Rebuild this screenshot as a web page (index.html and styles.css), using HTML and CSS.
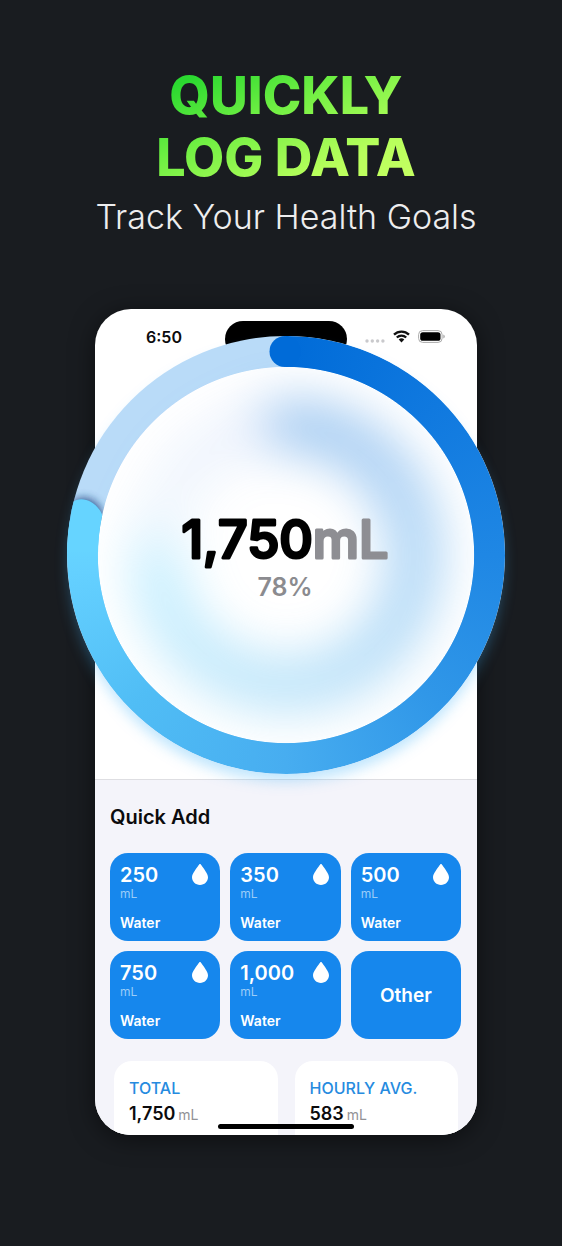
FILE: index.html
```
<!DOCTYPE html>
<html lang="en">
<head>
<meta charset="utf-8">
<meta name="viewport" content="width=device-width, initial-scale=1">
<title>Quickly Log Data</title>
<link rel="stylesheet" href="styles.css">
</head>
<body>
<svg class="defs" aria-hidden="true">
  <symbol id="drop" viewBox="0 0 16 21"><path d="M8 0C8.6 0 9.1.7 9.6 1.5C11.500 4.500 16 9.600 16 13.300C16 17.700 12.400 21 8 21S0 17.700 0 13.300C0 9.600 4.500 4.500 6.400 1.500C6.900.7 7.400 0 8 0Z" fill="#fff"/></symbol>
</svg>
<main class="page">
  <header class="hero">
    <h1 class="title">QUICKLY<br>LOG DATA</h1>
    <p class="subtitle">Track Your Health Goals</p>
  </header>
  <section class="phone">
    <div class="status">
      <span class="time">6:50</span>
      <span class="island"></span>
      <span class="indicators">
        <svg width="20" height="4" viewBox="0 0 20 4" class="cell"><g fill="#c9c9cc"><circle cx="2" cy="2" r="1.700"/><circle cx="7.300" cy="2" r="1.700"/><circle cx="12.600" cy="2" r="1.700"/><circle cx="17.900" cy="2" r="1.700"/></g></svg>
        <svg width="17" height="13" viewBox="0 0 17 13"><g fill="none" stroke="#111" stroke-width="2.300"><path d="M1 4.600A10.700 10.700 0 0 1 16 4.600"/><path d="M3.800 7.500A6.700 6.700 0 0 1 13.200 7.500"/></g><path d="M5.700 9.500A4 4 0 0 1 11.300 9.500L8.500 12.400Z" fill="#111"/></svg>
        <svg width="27" height="13" viewBox="0 0 27 13"><rect x=".6" y=".6" width="23.500" height="11.800" rx="4" fill="#fff" stroke="#aaa"/><rect x="2.200" y="2.200" width="20.300" height="8.600" rx="2.600" fill="#000"/><path d="M25.300 4.500Q26.800 5.200 26.800 6.500T25.300 8.500Z" fill="#aaa"/></svg>
      </span>
    </div>
    <div class="ring" role="meter" aria-label="Water intake" aria-valuemin="0" aria-valuemax="100" aria-valuenow="78">
      <div class="halo"><div class="halo-arc"></div></div>
      <div class="arc"></div>
      <svg class="ring-top" viewBox="0 0 438 438">
        <defs>
          <clipPath id="band"><path clip-rule="evenodd" d="M219 0a219 219 0 1 1 0 438a219 219 0 1 1 0-438ZM219 31a188 188 0 1 0 0 376a188 188 0 1 0 0-376Z"/></clipPath>
          <filter id="soft" x="-50%" y="-50%" width="200%" height="200%"><feGaussianBlur stdDeviation="4"/></filter>
        </defs>
        <circle cx="218" cy="15.500" r="15.500" fill="#006bd8"/>
        <g clip-path="url(#band)">
          <path d="M0 176C4 156 32 156 37 182L34 190L0 184Z" fill="#123e7c" opacity=".8" filter="url(#soft)"/>
          <path d="M-2 178C2 157 30 157 38 186V216H-2Z" fill="#66d4ff"/>
        </g>
        <text class="amount" x="218" y="222" text-anchor="middle">1,750<tspan class="amount-unit">mL</tspan></text>
        <text class="percent" x="218" y="260" text-anchor="middle">78%</text>
      </svg>
    </div>
    <div class="panel">
      <h2 class="panel-title">Quick Add</h2>
      <div class="quick">
        <button class="add"><span class="num">250</span><svg class="drop"><use href="#drop"/></svg><span class="unit">mL</span><span class="kind">Water</span></button>
        <button class="add"><span class="num">350</span><svg class="drop"><use href="#drop"/></svg><span class="unit">mL</span><span class="kind">Water</span></button>
        <button class="add"><span class="num">500</span><svg class="drop"><use href="#drop"/></svg><span class="unit">mL</span><span class="kind">Water</span></button>
        <button class="add"><span class="num">750</span><svg class="drop"><use href="#drop"/></svg><span class="unit">mL</span><span class="kind">Water</span></button>
        <button class="add"><span class="num">1,000</span><svg class="drop"><use href="#drop"/></svg><span class="unit">mL</span><span class="kind">Water</span></button>
        <button class="add other">Other</button>
      </div>
      <div class="stats">
        <div class="stat"><div class="label">TOTAL</div><div class="value">1,750<span class="small">mL</span></div></div>
        <div class="stat"><div class="label">HOURLY AVG.</div><div class="value">583<span class="small">mL</span></div></div>
      </div>
      <span class="home"></span>
    </div>
  </section>
</main>
</body>
</html>
```
FILE: styles.css
```
* { box-sizing: border-box; }
body { margin: 0; background: #191c20; font-family: Inter, "Liberation Sans", sans-serif; color: #0b0b0d; }
.defs { position: absolute; width: 0; height: 0; }
.page { padding: 64px 85px 111px 95px; }
.hero { display: flex; flex-direction: column; align-items: center; height: 245px; white-space: nowrap; }
.title {
  margin: 1px 0 0; font-size: 52px; line-height: 62px; font-weight: 800; text-align: center;
  background: linear-gradient(155deg, #2bd930 12%, #70ef43 40%, #b8ff5c 75%, #c8ff63);
  -webkit-background-clip: text; background-clip: text; color: transparent;
}
.subtitle { margin: 6px 0 0; font-size: 34px; line-height: 44px; font-weight: 300; color: #ededee; }
.phone { background: #fff; border-radius: 36px; box-shadow: 0 4px 24px rgba(0,0,0,.5); }
.status { display: grid; grid-template-columns: 1fr 122px 1fr; height: 54px; }
.time { margin-top: 18px; padding-left: 8px; text-align: center; font-size: 16px; line-height: 20px; font-weight: 600; }
.island { margin-top: 12px; height: 36px; border-radius: 18px; background: #000; }
.indicators { display: flex; gap: 8px; align-items: center; justify-content: flex-end; height: 13px; margin-top: 21px; padding-right: 32px; }
.cell { align-self: flex-end; }
.ring {
  position: relative; margin: -27px -28px 5px; aspect-ratio: 1; border-radius: 50%; z-index: 1;
  background: radial-gradient(circle closest-side, #fff 85.700%, #b9dbf8 86.100%);
  box-shadow: 0 9px 14px -2px rgba(70,180,250,.35);
}
.arc, .ring-top, .halo { position: absolute; inset: 0; width: 100%; height: 100%; }
.arc {
  border-radius: 50%;
  background: conic-gradient(#006bd8 0deg, #1079df 45deg, #1f87e4 90deg, #3097e8 135deg, #47adf0 180deg, #50bdf5 225deg, #64d0ff 265deg, #66d4ff 272deg, #66d4ff 279deg, transparent 279deg);
  mask: radial-gradient(circle closest-side, transparent 85.700%, #000 86.100%);
}
.halo { filter: blur(24px); opacity: .34; padding: 14%; }
.halo-arc {
  width: 100%; height: 100%; border-radius: 50%;
  background: conic-gradient(#006bd8 0deg, #1079df 45deg, #2f98e8 110deg, #47b5f0 180deg, #67d5ff 265deg, rgba(120,180,240,.3) 285deg, rgba(120,160,240,.35) 345deg, #006bd8 360deg);
  mask: radial-gradient(circle closest-side, transparent 64%, #000 65%);
}
.amount { font-size: 52px; font-weight: 500; fill: #000; stroke: #000; stroke-width: 3px; stroke-linejoin: round; }
.amount-unit { fill: #8e8e93; stroke: #8e8e93; }
.percent { font-size: 25px; font-weight: 600; fill: #8b8b8f; }
.panel {
  position: relative; overflow: hidden; height: 356px; padding: 24px 16px 0 15px;
  background: #f4f4fa; border-top: 1px solid #dedee2; border-radius: 0 0 36px 36px;
}
.panel-title { margin: 0 0 23px; font-size: 20px; line-height: 26px; font-weight: 600; }
.quick { display: grid; grid-template-columns: repeat(3, 1fr); gap: 10px; }
.add {
  display: grid; grid-template: 20px 20px 1fr / 1fr 16px; height: 88px; padding: 11px 12px 10px 10px;
  border: 0; border-radius: 18px; background: #1687ed; color: #fff; font-family: inherit; text-align: left;
}
.num { font-size: 20px; line-height: 22px; font-weight: 600; }
.drop { width: 16px; height: 21px; }
.unit { grid-column: 1 / 3; font-size: 12px; line-height: 20px; color: #9bcdf8; }
.kind { grid-column: 1 / 3; align-self: end; font-size: 14px; line-height: 16px; font-weight: 600; }
.other { display: block; padding: 0; text-align: center; font-size: 19px; font-weight: 600; }
.stats { display: grid; grid-template-columns: 1fr 1fr; gap: 17px; margin: 22px 3px 0 4px; }
.stat { height: 100px; padding: 17px 15px; border-radius: 18px; background: #fff; white-space: nowrap; }
.label { font-size: 16px; line-height: 20px; color: #268bdf; font-weight: 500; }
.value { margin-top: 4px; font-size: 18px; line-height: 24px; font-weight: 600; }
.small { margin-left: 3px; font-size: 14px; font-weight: 400; color: #929296; }
.home { position: absolute; left: 50%; bottom: 6px; width: 136px; height: 5px; margin-left: -68px; border-radius: 3px; background: #000; }
```
